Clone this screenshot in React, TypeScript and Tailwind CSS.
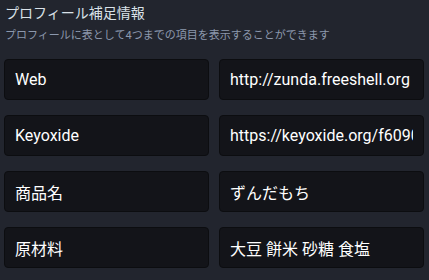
import React from "react";

const fields = [
  { name: "Web", value: "http://zunda.freeshell.org" },
  { name: "Keyoxide", value: "https://keyoxide.org/f6090c1b2c3d4e5f60718293a4b5c6d7e8f901234" },
  { name: "商品名", value: "ずんだもち" },
  { name: "原材料", value: "大豆 餅米 砂糖 食塩" },
];

const font = "font-['Roboto','Noto_Sans_CJK_JP',sans-serif]";

const Field: React.FC<{ value: string }> = ({ value }) => (
  <input
    type="text"
    defaultValue={value}
    readOnly
    className={`${font} block w-full h-[41px] rounded-[4px] border border-[#0c0d10] bg-[#131419] px-[10px] text-[16px] text-white outline-none`}
  />
);

export default function App() {
  return (
    <div className={`${font} w-[429px] h-[280px] overflow-hidden bg-[#22252e] pl-[4px] pr-[5px] pt-[3px]`}>
      <div className="pl-[1px] text-[14px] leading-[20px] text-[#d9e1e8]">
        プロフィール補足情報
      </div>
      <div className="pl-[1px] mt-[5px] text-[11px] leading-[16px] text-[#8c98ad]">
        プロフィールに表として4つまでの項目を表示することができます
      </div>
      <div className="mt-[15px] grid grid-cols-2 gap-x-[10px] gap-y-[15px]">
        {fields.map((f) => (
          <React.Fragment key={f.name}>
            <Field value={f.name} />
            <Field value={f.value} />
          </React.Fragment>
        ))}
      </div>
    </div>
  );
}
